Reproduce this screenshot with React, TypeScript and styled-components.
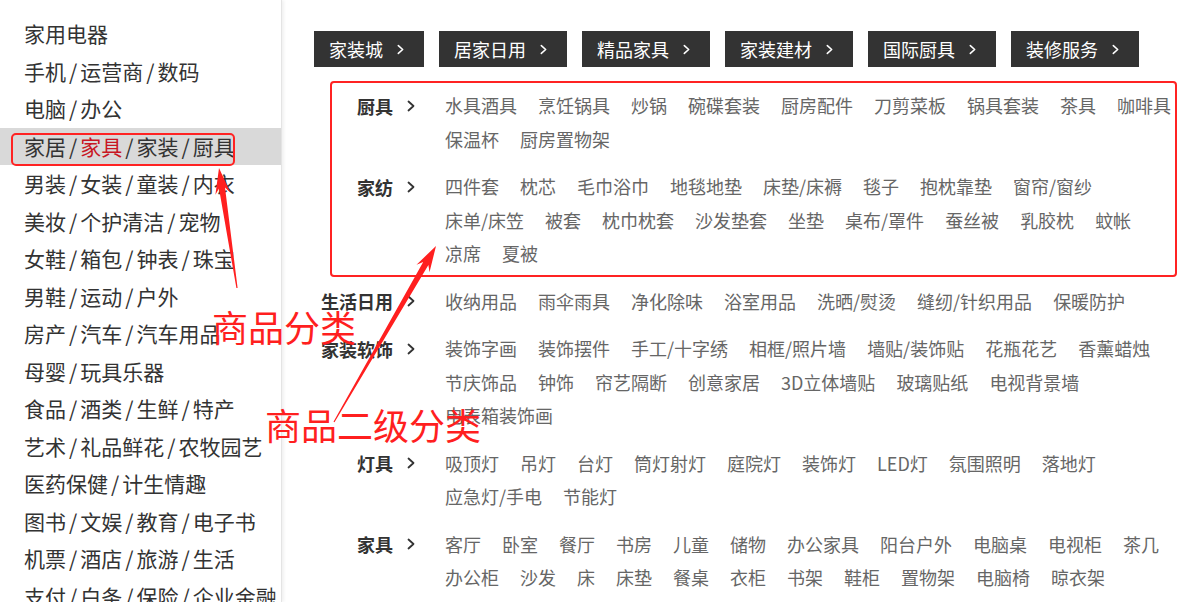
import React from "react";
import styled, { createGlobalStyle } from "styled-components";

const GlobalStyle = createGlobalStyle`
  html, body {
    margin: 0;
    padding: 0;
    background: #fff;
  }
  body {
    font-family: "Noto Sans CJK SC", "Noto Sans", sans-serif;
  }
`;

const sideCats: string[][] = [
  ["家用电器"],
  ["手机", "运营商", "数码"],
  ["电脑", "办公"],
  ["家居", "家具", "家装", "厨具"],
  ["男装", "女装", "童装", "内衣"],
  ["美妆", "个护清洁", "宠物"],
  ["女鞋", "箱包", "钟表", "珠宝"],
  ["男鞋", "运动", "户外"],
  ["房产", "汽车", "汽车用品"],
  ["母婴", "玩具乐器"],
  ["食品", "酒类", "生鲜", "特产"],
  ["艺术", "礼品鲜花", "农牧园艺"],
  ["医药保健", "计生情趣"],
  ["图书", "文娱", "教育", "电子书"],
  ["机票", "酒店", "旅游", "生活"],
  ["支付", "白条", "保险", "企业金融"],
];

const tabs = ["家装城", "居家日用", "精品家具", "家装建材", "国际厨具", "装修服务"];

const subCats: { title: string; items: string[] }[] = [
  {
    title: "厨具",
    items: ["水具酒具", "烹饪锅具", "炒锅", "碗碟套装", "厨房配件", "刀剪菜板", "锅具套装", "茶具", "咖啡具", "保温杯", "厨房置物架"],
  },
  {
    title: "家纺",
    items: [
      "四件套", "枕芯", "毛巾浴巾", "地毯地垫", "床垫/床褥", "毯子", "抱枕靠垫", "窗帘/窗纱",
      "床单/床笠", "被套", "枕巾枕套", "沙发垫套", "坐垫", "桌布/罩件", "蚕丝被", "乳胶枕", "蚊帐",
      "凉席", "夏被",
    ],
  },
  {
    title: "生活日用",
    items: ["收纳用品", "雨伞雨具", "净化除味", "浴室用品", "洗晒/熨烫", "缝纫/针织用品", "保暖防护"],
  },
  {
    title: "家装软饰",
    items: [
      "装饰字画", "装饰摆件", "手工/十字绣", "相框/照片墙", "墙贴/装饰贴", "花瓶花艺", "香薰蜡烛",
      "节庆饰品", "钟饰", "帘艺隔断", "创意家居", "3D立体墙贴", "玻璃贴纸", "电视背景墙",
      "电表箱装饰画",
    ],
  },
  {
    title: "灯具",
    items: ["吸顶灯", "吊灯", "台灯", "筒灯射灯", "庭院灯", "装饰灯", "LED灯", "氛围照明", "落地灯", "应急灯/手电", "节能灯"],
  },
  {
    title: "家具",
    items: [
      "客厅", "卧室", "餐厅", "书房", "儿童", "储物", "办公家具", "阳台户外", "电脑桌", "电视柜", "茶几",
      "办公柜", "沙发", "床", "床垫", "餐桌", "衣柜", "书架", "鞋柜", "置物架", "电脑椅", "晾衣架",
      "儿童床", "电竞椅", "定制家具",
    ],
  },
];

const Page = styled.div`
  position: relative;
  display: flex;
  width: 100%;
  height: 602px;
  overflow: hidden;
`;

const Sidebar = styled.aside`
  flex: 0 0 281px;
  padding-top: 15px;
  border-right: 1px solid #e4e4e4;
  box-shadow: 2px 0 3px rgba(0, 0, 0, 0.06);
`;

const SideItem = styled.div<{ $active?: boolean }>`
  height: 37.5px;
  line-height: 37.5px;
  padding-left: 24px;
  font-size: 21px;
  color: #333;
  white-space: nowrap;
  background: ${(p) => (p.$active ? "#d9d9d9" : "transparent")};
`;

const Sep = styled.span`
  margin: 0 3px;
`;

const SideLink = styled.span<{ $hot?: boolean }>`
  color: ${(p) => (p.$hot ? "#c81623" : "#333")};
`;

const Panel = styled.main`
  flex: 1;
  padding: 31px 0 0 32px;
`;

const TabBar = styled.nav`
  display: flex;
  gap: 15px;
`;

const Tab = styled.a`
  display: flex;
  align-items: center;
  gap: 14px;
  height: 36px;
  padding: 0 20px 0 15px;
  background: #333;
  color: #fff;
  font-size: 18px;
  text-decoration: none;
  white-space: nowrap;
`;

const CatList = styled.div`
  margin-top: 22px;
`;

const CatRow = styled.dl`
  display: flex;
  align-items: flex-start;
  margin: 0 0 14px;
`;

const CatTitle = styled.dt`
  flex: 0 0 101px;
  display: flex;
  justify-content: flex-end;
  align-items: center;
  gap: 14px;
  height: 33.5px;
  font-size: 18px;
  font-weight: 700;
  color: #333;
`;

const CatItems = styled.dd`
  display: flex;
  flex-wrap: wrap;
  column-gap: 21px;
  width: 728px;
  margin: 0 0 0 30px;
`;

const CatLink = styled.a`
  font-size: 18px;
  line-height: 33.5px;
  color: #666;
  text-decoration: none;
  white-space: nowrap;
`;

const NoteBox = styled.div<{ $x: number; $y: number; $w: number; $h: number; $r: number }>`
  position: absolute;
  left: ${(p) => p.$x}px;
  top: ${(p) => p.$y}px;
  width: ${(p) => p.$w}px;
  height: ${(p) => p.$h}px;
  border: 2px solid #ff2323;
  border-radius: ${(p) => p.$r}px;
  box-sizing: border-box;
  pointer-events: none;
`;

const NoteText = styled.div<{ $x: number; $y: number }>`
  position: absolute;
  left: ${(p) => p.$x}px;
  top: ${(p) => p.$y}px;
  font-size: 36px;
  line-height: 44px;
  color: #ff1f1f;
  white-space: nowrap;
  pointer-events: none;
`;

const Overlay = styled.svg`
  position: absolute;
  left: 0;
  top: 0;
  pointer-events: none;
`;

const Chevron: React.FC<{ color: string; w?: number; h?: number }> = ({ color, w = 8, h = 12 }) => (
  <svg width={w} height={h} viewBox="0 0 8 12" fill="none">
    <polyline points="1.5,1.5 6.5,6 1.5,10.5" stroke={color} strokeWidth="1.8" strokeLinecap="round" strokeLinejoin="round" />
  </svg>
);

function arrowPoints(tx: number, ty: number, px: number, py: number, head = 26, headW = 15, shaftW = 6) {
  const dx = px - tx;
  const dy = py - ty;
  const len = Math.hypot(dx, dy);
  const ux = dx / len;
  const uy = dy / len;
  const nx = -uy;
  const ny = ux;
  const neckX = px - ux * head * 0.78;
  const neckY = py - uy * head * 0.78;
  const barbX = px - ux * head;
  const barbY = py - uy * head;
  const pts = [
    [tx + nx * 0.6, ty + ny * 0.6],
    [neckX + (nx * shaftW) / 2, neckY + (ny * shaftW) / 2],
    [barbX + (nx * headW) / 2, barbY + (ny * headW) / 2],
    [px, py],
    [barbX - (nx * headW) / 2, barbY - (ny * headW) / 2],
    [neckX - (nx * shaftW) / 2, neckY - (ny * shaftW) / 2],
    [tx - nx * 0.6, ty - ny * 0.6],
  ];
  return pts.map((p) => p.map((v) => v.toFixed(1)).join(",")).join(" ");
}

const App: React.FC = () => {
  return (
    <Page>
      <GlobalStyle />
      <Sidebar>
        {sideCats.map((parts, i) => (
          <SideItem key={i} $active={i === 3}>
            {parts.map((p, j) => (
              <React.Fragment key={j}>
                {j > 0 && <Sep>/</Sep>}
                <SideLink $hot={i === 3 && j === 1}>{p}</SideLink>
              </React.Fragment>
            ))}
          </SideItem>
        ))}
      </Sidebar>

      <Panel>
        <TabBar>
          {tabs.map((t) => (
            <Tab key={t} href="#">
              {t}
              <Chevron color="#fff" w={7} h={11} />
            </Tab>
          ))}
        </TabBar>

        <CatList>
          {subCats.map((c) => (
            <CatRow key={c.title}>
              <CatTitle>
                {c.title}
                <Chevron color="#333" />
              </CatTitle>
              <CatItems>
                {c.items.map((it, k) => (
                  <CatLink key={k} href="#">
                    {it}
                  </CatLink>
                ))}
              </CatItems>
            </CatRow>
          ))}
        </CatList>
      </Panel>

      <NoteBox $x={11} $y={133} $w={224} $h={33} $r={5} />
      <NoteBox $x={330} $y={81} $w={847} $h={196} $r={4} />

      <Overlay width={1186} height={602} viewBox="0 0 1186 602">
        <polygon points={arrowPoints(237, 288, 219, 168)} fill="#ff1f1f" />
        <polygon points={arrowPoints(334, 422, 436, 246)} fill="#ff1f1f" />
      </Overlay>

      <NoteText $x={212} $y={304}>商品分类</NoteText>
      <NoteText $x={265} $y={402}>商品二级分类</NoteText>
    </Page>
  );
};

export default App;
